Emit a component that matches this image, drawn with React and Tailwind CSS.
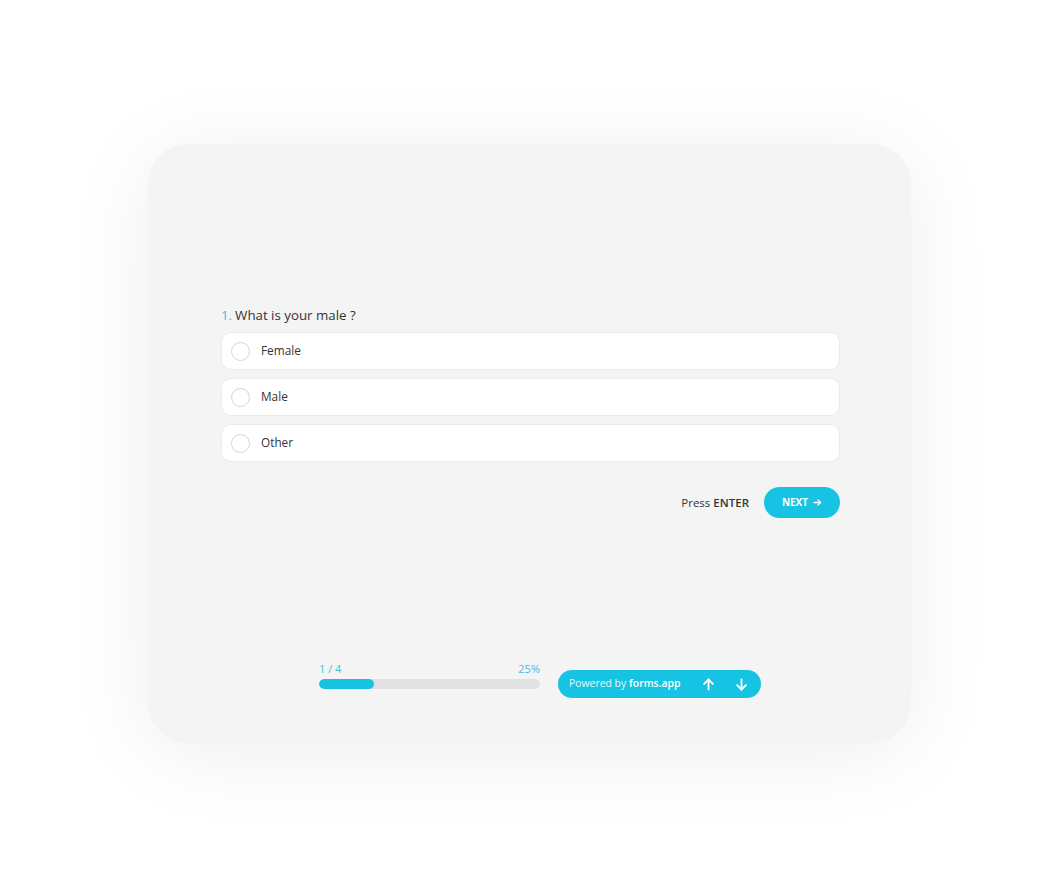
import React from 'react';

const options = ['Female', 'Male', 'Other'];

const ArrowUp = () => (
  <svg width="15" height="15" viewBox="0 0 24 24" fill="none" stroke="white" strokeWidth="3" strokeLinecap="round" strokeLinejoin="round">
    <path d="M12 20V4" />
    <path d="M5 11l7-7 7 7" />
  </svg>
);

const ArrowDown = () => (
  <svg width="15" height="15" viewBox="0 0 24 24" fill="none" stroke="white" strokeWidth="3" strokeLinecap="round" strokeLinejoin="round">
    <path d="M12 4v16" />
    <path d="M5 13l7 7 7-7" />
  </svg>
);

const App = () => {
  return (
    <div className="w-[1058px] h-[894px] bg-white pt-[144px] pl-[148px] font-['Open_Sans',sans-serif]">
      <div className="w-[763px] h-[599px] rounded-[40px] bg-[#f4f4f4] shadow-[0_10px_90px_rgba(0,0,0,0.07)] flex flex-col">
        {/* question */}
        <div className="pt-[161px] pl-[73px] pr-[71px]">
          <div className="text-[13.3px] leading-[20px] text-[#333]">
            <span className="text-[#3ec1dd] mr-[3px]">1.</span>What is your male ?
          </div>
          <div className="mt-[7px] flex flex-col gap-2">
            {options.map(opt => (
              <div key={opt} className="h-[38px] bg-white rounded-[10px] border border-[#ebebeb] flex items-center pl-[9px]">
                <div className="w-[19px] h-[19px] rounded-full border border-[#d6d6d6]" />
                <span className="ml-[11px] text-[11.8px] text-[#333]">{opt}</span>
              </div>
            ))}
          </div>
          <div className="mt-[25px] flex items-center justify-end gap-[15px]">
            <span className="text-[11.5px] text-[#333]">
              Press <span className="font-semibold">ENTER</span>
            </span>
            <button className="w-[76px] h-[31px] rounded-full bg-[#17c3e2] text-white text-[10px] font-bold flex items-center justify-center gap-[5px]">
              NEXT
              <svg width="9" height="9" viewBox="0 0 24 24" fill="none" stroke="white" strokeWidth="3.5" strokeLinecap="round" strokeLinejoin="round">
                <path d="M3 12h17" />
                <path d="M13 5l7 7-7 7" />
              </svg>
            </button>
          </div>
        </div>

        {/* footer */}
        <div className="mt-auto pb-[45px] pl-[171px] flex items-end gap-[18px]">
          <div className="w-[221px] pb-[9px]">
            <div className="flex justify-between text-[11px] leading-[15px] text-[#3ec1dd]">
              <span>1 / 4</span>
              <span>25%</span>
            </div>
            <div className="mt-[3px] h-[10px] rounded-full bg-[#e1e1e1] overflow-hidden">
              <div className="h-full w-1/4 bg-[#17c3e2] rounded-full" />
            </div>
          </div>
          <div className="w-[203px] h-[28px] rounded-full bg-[#17c3e2] flex items-center pl-[11px] text-white text-[10.4px]">
            <span className="opacity-90">Powered by</span>
            <span className="ml-[3px] font-semibold">forms.app</span>
            <div className="ml-auto mr-[12px] flex items-center gap-[18px]">
              <ArrowUp />
              <ArrowDown />
            </div>
          </div>
        </div>
      </div>
    </div>
  );
};

export default App;
